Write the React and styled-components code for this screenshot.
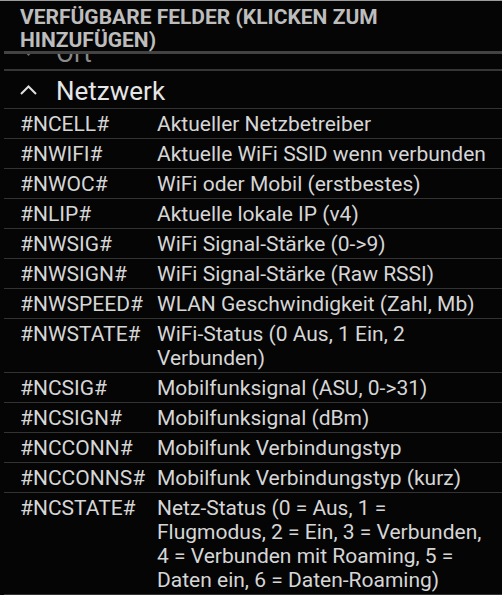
import React from 'react';
import styled, { createGlobalStyle } from 'styled-components';

const GlobalStyle = createGlobalStyle`
  html, body {
    margin: 0;
    padding: 0;
    background: #050505;
  }
  body {
    font-family: Roboto, "Noto Sans", "Liberation Sans", sans-serif;
  }
`;

const Screen = styled.div`
  width: 502px;
  height: 595px;
  background: #050505;
  border-top: 1px solid #9c9c9c;
  box-sizing: border-box;
  display: flex;
  flex-direction: column;
  overflow: hidden;
`;

const SectionHeader = styled.div`
  margin-left: 4px;
  padding: 5px 16px 0;
  height: 45px;
  font-weight: 700;
  font-size: 21px;
  line-height: 23px;
  color: #bdbdbd;
  border-bottom: 3px solid #434343;
  flex-shrink: 0;
  position: relative;
  z-index: 1;
`;

const Viewport = styled.div`
  flex: 1;
  overflow: hidden;
`;

const List = styled.div`
  margin-top: -21px;
`;

const GroupHeader = styled.div`
  margin-left: 4px;
  height: 38px;
  padding-left: 16px;
  display: flex;
  align-items: center;
  gap: 19px;
  box-sizing: border-box;
  border-bottom: ${p => (p.$open ? '1px solid #333' : '2px solid #363636')};
  color: ${p => (p.$open ? '#e6e6e6' : '#8a8a8a')};
  font-size: 26px;
`;

const GroupTitle = styled.span`
  line-height: 30px;
  padding-top: 3px;
`;

const Row = styled.div`
  margin-left: 4px;
  padding: 3px 8px 2px 16px;
  display: grid;
  grid-template-columns: 137px 1fr;
  font-size: 21px;
  line-height: 24px;
  color: #d6d6d6;
  border-bottom: 1px solid #333;
`;

const Key = styled.span`
  white-space: nowrap;
`;

const Desc = styled.span``;

const Chevron = ({ up, color }) => (
  <svg width="17" height="10" viewBox="0 0 17 10" style={{ flexShrink: 0 }}>
    <polyline
      points={up ? '1,9 8.5,1.5 16,9' : '1,1 8.5,8.5 16,1'}
      fill="none"
      stroke={color}
      strokeWidth="2"
    />
  </svg>
);

const fields = [
  ['#NCELL#', 'Aktueller Netzbetreiber'],
  ['#NWIFI#', 'Aktuelle WiFi SSID wenn verbunden'],
  ['#NWOC#', 'WiFi oder Mobil (erstbestes)'],
  ['#NLIP#', 'Aktuelle lokale IP (v4)'],
  ['#NWSIG#', 'WiFi Signal-Stärke (0->9)'],
  ['#NWSIGN#', 'WiFi Signal-Stärke (Raw RSSI)'],
  ['#NWSPEED#', 'WLAN Geschwindigkeit (Zahl, Mb)'],
  ['#NWSTATE#', 'WiFi-Status (0 Aus, 1 Ein, 2 Verbunden)'],
  ['#NCSIG#', 'Mobilfunksignal (ASU, 0->31)'],
  ['#NCSIGN#', 'Mobilfunksignal (dBm)'],
  ['#NCCONN#', 'Mobilfunk Verbindungstyp'],
  ['#NCCONNS#', 'Mobilfunk Verbindungstyp (kurz)'],
  ['#NCSTATE#', 'Netz-Status (0 = Aus, 1 = Flugmodus, 2 = Ein, 3 = Verbunden, 4 = Verbunden mit Roaming, 5 = Daten ein, 6 = Daten-Roaming)'],
];

export default function App() {
  return (
    <>
      <GlobalStyle />
      <Screen>
        <SectionHeader>VERFÜGBARE FELDER (KLICKEN ZUM HINZUFÜGEN)</SectionHeader>
        <Viewport>
          <List>
            <GroupHeader>
              <Chevron color="#6a6a6a" />
              <GroupTitle>Ort</GroupTitle>
            </GroupHeader>
            <GroupHeader $open>
              <Chevron up color="#e0e0e0" />
              <GroupTitle>Netzwerk</GroupTitle>
            </GroupHeader>
            {fields.map(([key, desc]) => (
              <Row key={key}>
                <Key>{key}</Key>
                <Desc>{desc}</Desc>
              </Row>
            ))}
          </List>
        </Viewport>
      </Screen>
    </>
  );
}
